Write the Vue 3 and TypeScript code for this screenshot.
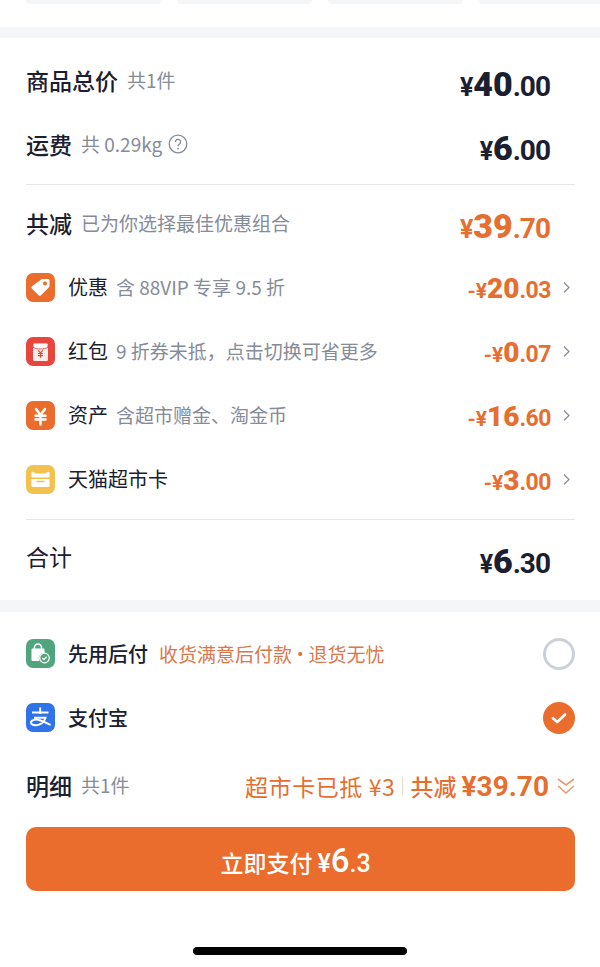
<script setup lang="ts">
interface Discount {
  key: string
  name: string
  note: string
  big: string
  small: string
}

const discounts: Discount[] = [
  { key: 'coupon', name: '优惠', note: '含 88VIP 专享 9.5 折', big: '20', small: '.03' },
  { key: 'packet', name: '红包', note: '9 折券未抵，点击切换可省更多', big: '0', small: '.07' },
  { key: 'asset', name: '资产', note: '含超市赠金、淘金币', big: '16', small: '.60' },
  { key: 'card', name: '天猫超市卡', note: '', big: '3', small: '.00' },
]
</script>

<template>
  <div class="page">
    <div class="tabs">
      <span class="tab"></span>
      <span class="tab"></span>
      <span class="tab"></span>
      <span class="tab"></span>
    </div>
    <div class="band"></div>

    <section class="summary">
      <div class="row first">
        <div class="left">
          <span class="title">商品总价</span>
          <span class="note">共1件</span>
        </div>
        <div class="price dark"><i>¥</i><b>40</b><em>.00</em></div>
      </div>
      <div class="row first">
        <div class="left">
          <span class="title">运费</span>
          <span class="note">共 0.29kg</span>
          <svg class="help" width="20" height="20" viewBox="0 0 20 20">
            <circle cx="10" cy="10" r="8.8" fill="none" stroke="#858b99" stroke-width="1.3" />
            <path d="M7.4 7.9a2.6 2.6 0 1 1 4 2.2c-.9.6-1.4 1-1.4 2.1" fill="none" stroke="#858b99" stroke-width="1.3" />
            <circle cx="10" cy="14.6" r=".9" fill="#858b99" />
          </svg>
        </div>
        <div class="price dark"><i>¥</i><b>6</b><em>.00</em></div>
      </div>
      <hr class="line" />
      <div class="row">
        <div class="left">
          <span class="title">共减</span>
          <span class="note">已为你选择最佳优惠组合</span>
        </div>
        <div class="price orange"><i>¥</i><b>39</b><em>.70</em></div>
      </div>

      <div v-for="d in discounts" :key="d.key" class="row">
        <div class="left">
          <span class="icon" :class="d.key">
            <svg v-if="d.key === 'coupon'" width="29" height="29" viewBox="0 0 29 29">
              <path d="M16.400 6h5.600a1.500 1.500 0 0 1 1.500 1.500v5.600c0 .5-.2.9-.5 1.200l-8 8a1.700 1.700 0 0 1-2.400 0L6 15.700a1.700 1.700 0 0 1 0-2.400l9.200-6.900c.3-.3.800-.4 1.200-.4z" fill="#fff" />
              <circle cx="19" cy="10.500" r="2" fill="#ea6d2d" />
            </svg>
            <svg v-else-if="d.key === 'packet'" width="29" height="29" viewBox="0 0 29 29">
              <rect x="7" y="6" width="15" height="18" rx="1.500" fill="#fdeeee" />
              <path d="M7 7.500A1.500 1.500 0 0 1 8.500 6h12A1.500 1.500 0 0 1 22 7.500v2.700c-2 1.200-4.500 1.800-7.500 1.800S9 11.400 7 10.200z" fill="#fff" stroke="#e8453c" stroke-width=".9" />
              <path d="M12.200 13.400l2.300 2.500 2.300-2.500M12 16.500h5M12 18.600h5M14.500 15.800v5" fill="none" stroke="#e8453c" stroke-width="1.200" />
            </svg>
            <svg v-else-if="d.key === 'asset'" width="29" height="29" viewBox="0 0 29 29">
              <path d="M10 8l4.500 6 4.500-6M9.500 14.800h10M9.500 18.500h10M14.500 14v9.500" fill="none" stroke="#fff" stroke-width="2.500" stroke-linecap="round" />
            </svg>
            <svg v-else width="29" height="29" viewBox="0 0 29 29">
              <path d="M5.500 7.600c0-.8.800-1.200 1.400-.8l3 1.700h9.200l3-1.700c.6-.4 1.400 0 1.400.8v5H5.500z" fill="#fff" />
              <path d="M5.500 14h18v6.500a1.500 1.500 0 0 1-1.500 1.500H7a1.500 1.500 0 0 1-1.500-1.500z" fill="#fff" />
              <path d="M11 16.500h7" stroke="#f2c14e" stroke-width="1.400" stroke-linecap="round" />
            </svg>
          </span>
          <span class="name">{{ d.name }}</span>
          <span v-if="d.note" class="note">{{ d.note }}</span>
        </div>
        <div class="right">
          <div class="price orange small"><i>-¥</i><b>{{ d.big }}</b><em>{{ d.small }}</em></div>
          <svg class="chev" width="7" height="11" viewBox="0 0 7 11">
            <path d="M1 .8l5 4.700-5 4.700" fill="none" stroke="#858b99" stroke-width="1.200" />
          </svg>
        </div>
      </div>
      <hr class="line" />
      <div class="row">
        <div class="left">
          <span class="total">合计</span>
        </div>
        <div class="price dark"><i>¥</i><b>6</b><em>.30</em></div>
      </div>
    </section>
    <div class="band second"></div>

    <section class="pay">
      <div class="row">
        <div class="left">
          <span class="icon later">
            <svg width="29" height="29" viewBox="0 0 29 29">
              <path d="M8.500 10V8.500a3.500 3.500 0 0 1 7 0V10" fill="none" stroke="#fff" stroke-width="1.500" />
              <path d="M6.500 9.500h11a1 1 0 0 1 1 1v3.700a5.300 5.300 0 0 0-5.200 7.800H6.500a1 1 0 0 1-1-1v-10.500a1 1 0 0 1 1-1z" fill="#fff" />
              <circle cx="18.500" cy="19" r="4.800" fill="none" stroke="#fff" stroke-width="1.300" />
              <path d="M16.300 19l1.600 1.600 2.700-2.800" fill="none" stroke="#fff" stroke-width="1.300" />
            </svg>
          </span>
          <span class="name strong">先用后付</span>
          <span class="promo">收货满意后付款 · 退货无忧</span>
        </div>
        <span class="radio"></span>
      </div>
      <div class="row">
        <div class="left">
          <span class="icon alipay">
            <svg width="29" height="29" viewBox="0 0 29 29">
              <path d="M6 9.500h16.500M14.200 4.500v6.500M8 14.800h11.500c-1.300 3.500-3.400 5.700-6.500 6.800-3.300 1.100-8 .7-8-2 0-2.700 4.800-3.800 9.500-2.100 3.800 1.300 7 3 10 4.500" fill="none" stroke="#fff" stroke-width="1.900" />
            </svg>
          </span>
          <span class="name strong">支付宝</span>
        </div>
        <span class="radio checked">
          <svg width="18" height="14" viewBox="0 0 18 14">
            <path d="M3 7.200l4.200 3.800L15 3.500" fill="none" stroke="#fff" stroke-width="2.600" stroke-linecap="round" stroke-linejoin="round" />
          </svg>
        </span>
      </div>
      <div class="detail">
        <div class="left">
          <span class="title">明细</span>
          <span class="note">共1件</span>
        </div>
        <div class="detail-right">
          <span class="used">超市卡已抵 ¥3</span>
          <span class="sep"></span>
          <span class="saved">共减 <b>¥39.70</b></span>
          <svg width="18" height="20" viewBox="0 0 18 20">
            <path d="M1 3l8 6 8-6M1 10l8 7 8-7" fill="none" stroke="#ea9a6c" stroke-width="1.600" />
          </svg>
        </div>
      </div>
      <button class="submit" type="button">立即支付 <i>¥</i><b>6</b><em>.3</em></button>
    </section>
    <div class="home"></div>
  </div>
</template>

<style scoped>
.page {
  width: 600px;
  height: 967px;
  overflow: hidden;
  background: #fff;
  color: #1a2030;
  font-family: "Noto Sans CJK SC", "Liberation Sans", sans-serif;
}

.tabs {
  display: flex;
  gap: 16px;
  height: 27px;
  padding-left: 26px;
  overflow: hidden;
}

.tab {
  flex: none;
  width: 135px;
  height: 4px;
  border-radius: 0 0 12px 12px;
  background: #f5f6f8;
}

.band {
  height: 11px;
  background: #f5f6f8;
}

.band.second {
  height: 12px;
}

.summary {
  height: 562px;
  padding: 11px 25px 0 26px;
  box-sizing: border-box;
}

.row {
  display: flex;
  align-items: center;
  justify-content: space-between;
  height: 64px;
}

.left {
  display: flex;
  align-items: center;
}

.title,
.note,
.name,
.promo {
  margin-bottom: 3px;
}

.title {
  margin-right: 9px;
  font-size: 23px;
  font-weight: 500;
}

.total {
  margin-bottom: 6px;
  font-size: 23px;
}

.note {
  font-size: 19px;
  color: #858b99;
  white-space: nowrap;
}

.help {
  margin-left: 6px;
  margin-bottom: 3px;
}

.line {
  height: 1px;
  margin: 7px 0;
  border: 0;
  background: #e4e6ea;
}

.price {
  display: flex;
  align-items: baseline;
  margin-top: 4px;
  padding-right: 25px;
  font-family: Roboto, "Liberation Sans", sans-serif;
  font-weight: 700;
}

.first .price {
  margin-top: 6px;
}

.price i {
  font-style: normal;
  font-size: 25px;
}

.price b {
  font-size: 34px;
}

.price em {
  font-style: normal;
  font-size: 28px;
  letter-spacing: -1px;
}

.price.small {
  margin-top: 0;
  padding-right: 0;
}

.price.small i {
  font-size: 21px;
}

.price.small b {
  font-size: 28px;
}

.price.small em {
  font-size: 23px;
  letter-spacing: -.5px;
}

.dark {
  color: #1a2030;
}

.orange {
  color: #e66f2f;
}

.right {
  display: flex;
  align-items: center;
  gap: 12px;
  padding-right: 5px;
}

.chev {
  margin-bottom: 2px;
}

.icon {
  display: flex;
  flex: none;
  width: 29px;
  height: 29px;
  margin-right: 13px;
  margin-bottom: 2px;
  border-radius: 7px;
}

.icon.coupon,
.icon.asset {
  background: #ea6d2d;
}

.icon.packet {
  background: #e8453c;
}

.icon.card {
  background: #f2c14e;
}

.icon.later {
  background: #4fa67e;
}

.icon.alipay {
  background: #2f73ea;
}

.name {
  margin-right: 8px;
  font-size: 20px;
}

.name.strong {
  margin-right: 9px;
  margin-bottom: 1px;
  font-weight: 500;
}

.promo {
  margin-left: 2px;
  margin-bottom: 1px;
  font-size: 19px;
  color: #d9774a;
  white-space: nowrap;
  word-spacing: -5.500px;
}

.pay {
  padding: 10px 25px 0 26px;
}

.radio {
  display: flex;
  align-items: center;
  justify-content: center;
  width: 32px;
  height: 32px;
  box-sizing: border-box;
  border: 3px solid #ccd0d9;
  border-radius: 50%;
}

.radio.checked {
  border: 0;
  background: #ea6d2d;
}

.detail {
  display: flex;
  align-items: center;
  justify-content: space-between;
  height: 64px;
  margin: 5px 0 8px;
}

.detail .left,
.detail .detail-right {
  margin-top: -2px;
}

.detail-right {
  display: flex;
  align-items: center;
  color: #e66f2f;
  font-size: 23px;
}

.used {
  letter-spacing: .6px;
  white-space: nowrap;
}

.sep {
  width: 1px;
  height: 18px;
  margin: 0 7px;
  background: #e8d5c8;
}

.saved {
  margin-right: 8px;
  font-weight: 500;
  white-space: nowrap;
}

.saved b {
  font-family: Roboto, "Liberation Sans", sans-serif;
  font-size: 28px;
  font-weight: 700;
}

.submit {
  display: flex;
  align-items: baseline;
  justify-content: center;
  width: 100%;
  height: 64px;
  padding: 14px 10px 0 0;
  border: 0;
  border-radius: 10px;
  background: #ea6d2d;
  color: #fff;
  font-family: inherit;
  font-size: 23px;
  font-weight: 500;
}

.submit i {
  margin-left: 5px;
  font-style: normal;
  font-family: Roboto, sans-serif;
  font-size: 25px;
}

.submit b {
  font-family: Roboto, "Liberation Sans", sans-serif;
  font-size: 33px;
  font-weight: 500;
}

.submit em {
  font-family: Roboto, "Liberation Sans", sans-serif;
  font-style: normal;
  font-size: 25px;
}

.home {
  width: 214px;
  height: 8px;
  margin: 56px auto 0;
  border-radius: 4px;
  background: #000;
}
</style>

<style>
body {
  margin: 0;
  background: #fff;
}
</style>
